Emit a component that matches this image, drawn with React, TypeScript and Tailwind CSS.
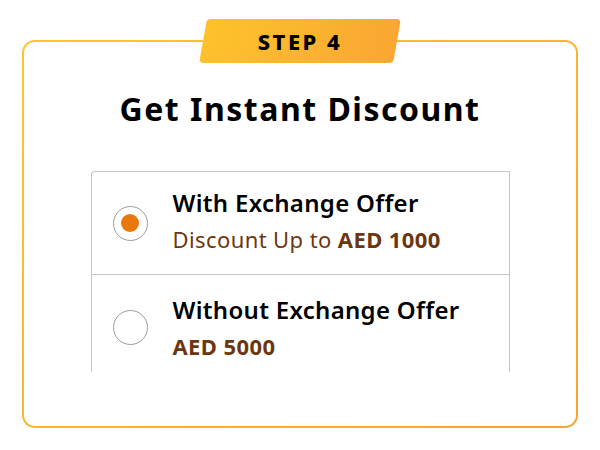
import React from "react";

function Radio({ checked }: { checked: boolean }) {
  return (
    <div className="w-[35px] h-[35px] rounded-full border border-[#9a9a9a] flex items-center justify-center shrink-0 bg-white">
      {checked && <div className="w-[18px] h-[18px] rounded-full bg-[#e8780b]" />}
    </div>
  );
}

export default function App() {
  return (
    <div
      className="w-[600px] h-[450px] bg-white relative"
      style={{ fontFamily: "'Noto Sans', sans-serif" }}
    >
      <div className="absolute left-[22px] top-[40px] w-[556px] h-[388px] rounded-[13px] p-[2px] bg-gradient-to-br from-[#fdc62a] to-[#f9a331]">
        <div className="w-full h-full rounded-[11px] bg-white flex flex-col items-center">
          <h1 className="mt-[47px] text-[32px] leading-[40px] font-bold tracking-[1.5px] text-black">
            Get Instant Discount
          </h1>
          <div className="mt-[42px] w-[419px] h-[201px] overflow-hidden">
            <div className="border-l border-r border-t border-[#c6c6c6] rounded-tl-[4px]">
              <div className="h-[103px] flex items-center pl-[21px] border-b border-[#c6c6c6]">
                <Radio checked />
                <div className="ml-[25px] flex flex-col pb-[6px]">
                  <div className="text-[24px] leading-[34px] mb-[3px] font-semibold tracking-[0.3px] text-black">With Exchange Offer</div>
                  <div className="text-[22px] leading-[32px] tracking-[0.4px] text-[#6b3711]">
                    Discount Up to <span className="font-bold">AED 1000</span>
                  </div>
                </div>
              </div>
              <div className="h-[106px] flex items-center pl-[21px] pb-[2px]">
                <Radio checked={false} />
                <div className="ml-[25px] flex flex-col">
                  <div className="text-[24px] leading-[34px] mb-[3px] font-semibold tracking-[0.3px] text-black">Without Exchange Offer</div>
                  <div className="text-[22px] leading-[32px] tracking-[0.4px] font-bold text-[#6b3711]">AED 5000</div>
                </div>
              </div>
            </div>
          </div>
        </div>
      </div>
      <div className="absolute left-[199px] top-[19px] w-[202px] h-[44px] flex items-center justify-center">
        <div className="absolute inset-y-0 left-[4px] right-[4px] rounded-[4px] bg-gradient-to-r from-[#fdc22b] to-[#f9a732] -skew-x-[10deg]" />
        <span className="relative text-[22px] font-extrabold tracking-[2.5px] text-black">STEP 4</span>
      </div>
    </div>
  );
}
